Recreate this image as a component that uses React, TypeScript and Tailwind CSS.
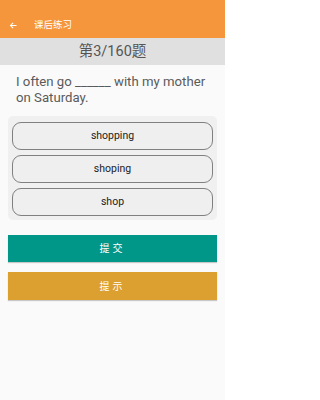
const OPTIONS = ['shopping', 'shoping', 'shop']

const FONT = { fontFamily: 'Roboto, "Noto Sans CJK SC", sans-serif' }

export default function App() {
  return (
    <div style={FONT} className="flex h-[400px] w-[225px] flex-col bg-[#fafafa]">
      <header className="flex h-[38px] items-center bg-[#f5963c] pt-[12px] text-white">
        <svg viewBox="0 0 24 24" className="ml-[9px] h-[9px] w-[9px]" fill="none" stroke="currentColor" strokeWidth="2.8">
          <path d="M20 12H5M11 5l-7 7 7 7" />
        </svg>
        <span className="ml-[16px] text-[9.5px]">课后练习</span>
      </header>

      <div className="flex h-[27px] items-center justify-center bg-[#e0e0e0] text-[14.5px] text-[#555]">
        第3/160题
      </div>

      <p className="pl-[16px] pr-[8px] pt-[9px] text-[13.2px] leading-[16px] text-[#5a5a5a]">
        I often go ______ with my mother on Saturday.
      </p>

      <div className="mx-[8px] mt-[10px] flex flex-col gap-[5px] rounded-[5px] bg-[#f0f0f0] px-[4px] pb-[4px] pt-[6px]">
        {OPTIONS.map((o) => (
          <button
            key={o}
            className="h-[28px] rounded-[9px] border border-[#808080] bg-[#efefef] text-[10.5px] text-[#222]"
          >
            {o}
          </button>
        ))}
      </div>

      <button className="mx-[8px] mt-[15px] h-[27px] bg-[#009688] text-[10px] tracking-[3px] text-white shadow-[0_1px_1px_rgba(0,0,0,0.2)]">
        提交
      </button>
      <button className="mx-[8px] mt-[10px] h-[28px] bg-[#dca030] text-[10px] tracking-[3px] text-white shadow-[0_1px_1px_rgba(0,0,0,0.2)]">
        提示
      </button>
    </div>
  )
}
